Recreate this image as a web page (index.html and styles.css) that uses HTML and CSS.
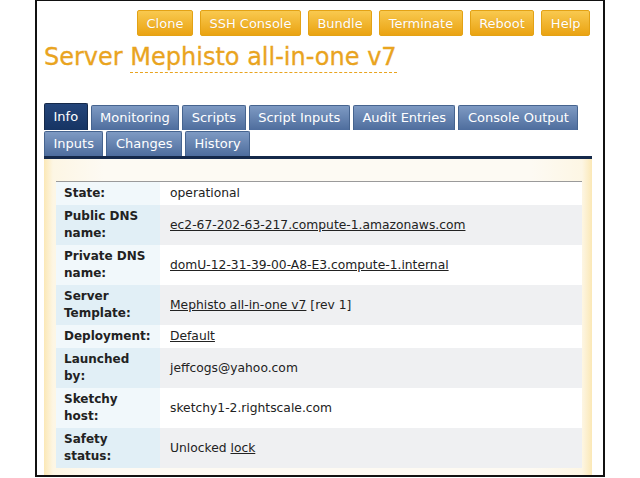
FILE: index.html
```html
<!DOCTYPE html>
<html lang="en">
<head>
    <meta charset="UTF-8">
    <meta name="viewport" content="width=device-width, initial-scale=1.0">
    <title>Server Mephisto all-in-one v7</title>
    <link rel="stylesheet" href="styles.css">
</head>
<body>

    <div class="frame">
        <!-- Action buttons -->
        <div class="actions">
            <button class="btn">Clone</button>
            <button class="btn">SSH Console</button>
            <button class="btn">Bundle</button>
            <button class="btn">Terminate</button>
            <button class="btn">Reboot</button>
            <button class="btn">Help</button>
        </div>

        <h1 class="title">Server <span class="name">Mephisto all-in-one v7</span></h1>

        <!-- Tabs -->
        <div class="tabs">
            <div class="tab-row">
                <a class="tab active" href="#">Info</a>
                <a class="tab" href="#">Monitoring</a>
                <a class="tab" href="#">Scripts</a>
                <a class="tab" href="#">Script Inputs</a>
                <a class="tab" href="#">Audit Entries</a>
                <a class="tab" href="#">Console Output</a>
            </div>
            <div class="tab-row">
                <a class="tab" href="#">Inputs</a>
                <a class="tab" href="#">Changes</a>
                <a class="tab" href="#">History</a>
            </div>
        </div>

        <!-- Info panel -->
        <div class="panel">
            <table class="info">
                <tr>
                    <th>State:</th>
                    <td>operational</td>
                </tr>
                <tr>
                    <th>Public DNS name:</th>
                    <td><a href="#">ec2-67-202-63-217.compute-1.amazonaws.com</a></td>
                </tr>
                <tr>
                    <th>Private DNS name:</th>
                    <td><a href="#">domU-12-31-39-00-A8-E3.compute-1.internal</a></td>
                </tr>
                <tr>
                    <th>Server Template:</th>
                    <td><a href="#">Mephisto all-in-one v7</a> [rev 1]</td>
                </tr>
                <tr>
                    <th>Deployment:</th>
                    <td><a href="#">Default</a></td>
                </tr>
                <tr>
                    <th>Launched by:</th>
                    <td>jeffcogs@yahoo.com</td>
                </tr>
                <tr>
                    <th>Sketchy host:</th>
                    <td>sketchy1-2.rightscale.com</td>
                </tr>
                <tr>
                    <th>Safety status:</th>
                    <td>Unlocked <a href="#">lock</a></td>
                </tr>
            </table>
        </div>
    </div>

</body>
</html>
```

FILE: styles.css
```css
body {
    margin: 0;
    font-family: "DejaVu Sans", Verdana, sans-serif;
    background: white;
    color: #222;
}

.frame {
    box-sizing: border-box;
    margin-left: 35px;
    width: 570px;
    height: 477px;
    border: 2px solid #111;
    border-top-width: 1px;
    padding: 0 11px 0 7px;
    overflow: hidden;
}

.actions {
    display: flex;
    justify-content: flex-end;
    gap: 7px;
    margin-top: 9px;
    padding-right: 2px;
}

.btn {
    font-family: inherit;
    font-size: 13px;
    color: white;
    height: 26px;
    padding: 0 8.5px;
    border: 1px solid #e3a215;
    border-radius: 2px;
    background: linear-gradient(#f9c94f, #eaa312);
    text-shadow: 0 0 1px rgba(180, 110, 0, 0.4);
}

.title {
    margin: 7px 0 0;
    font-size: 24px;
    font-weight: normal;
    line-height: 28px;
    color: #e9a41f;
    -webkit-text-stroke: 0.3px #e9a41f;
}

.title .name {
    border-bottom: 1px dashed #e9a41f;
    padding-bottom: 1px;
}

.tabs {
    margin-top: 32px;
    border-bottom: 3px solid #15294a;
}

.tab-row {
    display: flex;
    align-items: flex-end;
    gap: 3px;
}

.tab {
    font-size: 13px;
    color: white;
    text-decoration: none;
    height: 24px;
    line-height: 24px;
    padding: 0 8.5px;
    border: 1px solid #46648f;
    border-bottom: none;
    border-radius: 2px 2px 0 0;
    background: linear-gradient(#7e9ac3, #4e6d9d);
}

.tab-row + .tab-row .tab {
    margin-top: 1px;
}

.tab.active {
    height: 26px;
    line-height: 26px;
    background: linear-gradient(#24457a, #163463);
    border-color: #15294a;
}

.panel {
    height: 320px;
    padding: 22px 10px 0 12px;
    background: linear-gradient(to right, #fbe8b6 0, #fdf6e4 9px, #fdfaf3 60px, #fdfaf3 calc(100% - 60px), #fdf6e4 calc(100% - 10px), #fbe8b6 100%);
}

.info {
    width: 100%;
    border-collapse: collapse;
    border-top: 1px solid #9a9a9a;
    font-size: 12px;
    line-height: 17px;
}

.info th {
    width: 88px;
    padding: 3px 8px 3px 8px;
    text-align: left;
    vertical-align: middle;
    background: #f1f8fb;
}

.info td {
    padding: 3px 10px;
    vertical-align: middle;
    background: white;
    font-size: 12.3px;
}

.info tr:nth-child(even) th {
    background: #e1eff6;
}

.info tr:nth-child(even) td {
    background: #eff0f2;
}

.info a {
    color: #222;
}
```
